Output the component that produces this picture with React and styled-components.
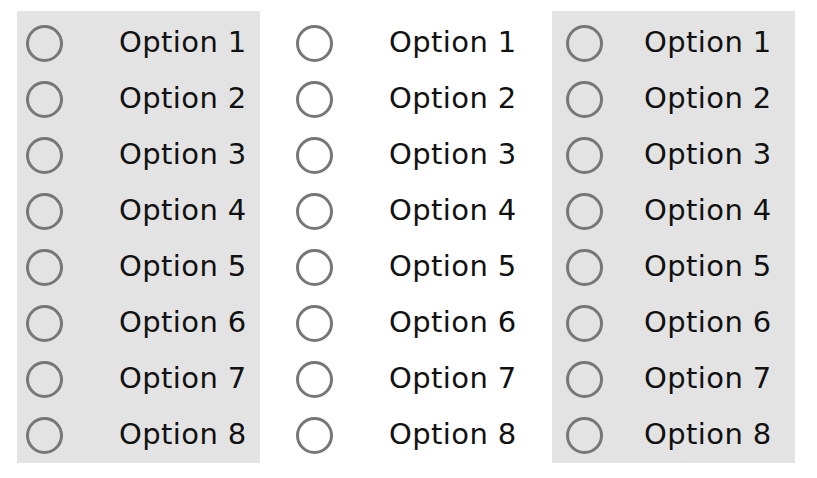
import React from "react";
import styled, { createGlobalStyle } from "styled-components";

const Global = createGlobalStyle`
  html, body { margin: 0; padding: 0; background: #ffffff; }
  body { font-family: "DejaVu Sans", Verdana, sans-serif; }
`;

const Page = styled.div`
  display: flex;
  align-items: flex-start;
  padding: 11px 0 0 17px;
  width: 817px;
  height: 478px;
  box-sizing: border-box;
`;

const Column = styled.div`
  width: 243px;
  height: 452px;
  box-sizing: border-box;
  margin-right: ${(p) => p.$after}px;
  background: ${(p) => (p.$shaded ? "#e3e3e3" : "transparent")};
  padding: 3px 0 1px ${(p) => p.$padLeft}px;
  display: grid;
  grid-template-rows: repeat(8, 56px);
`;

const Row = styled.label`
  display: grid;
  grid-template-columns: 37px auto;
  column-gap: ${(p) => p.$gap}px;
  align-items: center;
  justify-content: start;
`;

const Circle = styled.span`
  width: 37px;
  height: 37px;
  box-sizing: border-box;
  border: 3px solid #777777;
  border-radius: 50%;
  margin-top: 2px;
`;

const Label = styled.span`
  font-family: "DejaVu Sans", Verdana, sans-serif;
  font-size: 29px;
  letter-spacing: 0.4px;
  color: #111111;
  white-space: nowrap;
  margin-top: -1px;
`;

const columns = [
  { shaded: true, padLeft: 9, gap: 56, after: 27 },
  { shaded: false, padLeft: 9, gap: 56, after: 22 },
  { shaded: true, padLeft: 14, gap: 41, after: 0 },
];

export default function App() {
  return (
    <>
      <Global />
      <Page>
        {columns.map((c, ci) => (
          <Column key={ci} $shaded={c.shaded} $padLeft={c.padLeft} $after={c.after}>
            {Array.from({ length: 8 }, (_, i) => (
              <Row key={i} $gap={c.gap}>
                <Circle />
                <Label>Option {i + 1}</Label>
              </Row>
            ))}
          </Column>
        ))}
      </Page>
    </>
  );
}
